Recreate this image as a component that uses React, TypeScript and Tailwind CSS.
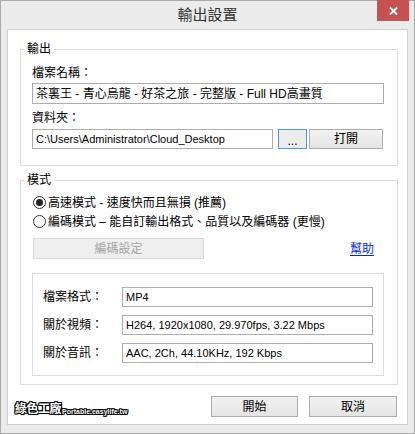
const fieldBox = "h-[20px] border border-[#acacac] bg-white px-[3px] flex items-center text-black whitespace-nowrap overflow-hidden";
const btn = "border border-[#acacac] bg-linear-to-b from-[#f2f2f2] to-[#e4e4e4] flex items-center justify-center text-black";

const Radio = ({ checked, children }: { checked?: boolean; children: React.ReactNode }) => (
  <div className="h-[19px] ml-[1px] flex items-center gap-[2px]">
    <span className="w-[13px] h-[13px] rounded-full border border-[#333] bg-white flex items-center justify-center">
      {checked && <span className="w-[7px] h-[7px] rounded-full bg-[#222]"></span>}
    </span>
    <span>{children}</span>
  </div>
);

const InfoRow = ({ label, value }: { label: string; value: string }) => (
  <>
    <div className="h-[20px] flex items-center">{label}</div>
    <div className={`${fieldBox} text-[11px]`}>{value}</div>
  </>
);

const App = () => {
  return (
    <div className="w-[415px] h-[434px] bg-[#ebebeb] border border-[#a9a9a9] flex flex-col text-[12px] leading-[16px] text-black font-['Liberation_Sans','Noto_Sans_CJK_TC',sans-serif]">
      {/* title bar */}
      <div className="relative h-[28px] shrink-0 flex items-center justify-center">
        <span className="text-[15px] text-[#333]">輸出設置</span>
        <div className="absolute top-[-1px] right-[5px] w-[32px] h-[21px] bg-[#c75050] flex items-center justify-center">
          <svg width="9" height="8" viewBox="0 0 9 8">
            <path d="M1 0.5 L8 7.5 M8 0.5 L1 7.5" stroke="#fff" strokeWidth="1.9" />
          </svg>
        </div>
      </div>

      {/* client */}
      <div className="mx-[6px] mb-[8px] flex-1 border border-[#cfcfcf] bg-white flex flex-col pl-[12px] pr-[9px] pt-[11px]">
        <fieldset className="border border-[#dcdcdc]">
          <legend className="ml-[3px] px-[3px] leading-[16px]">輸出</legend>
          <div className="pl-[11px] pr-[13px] pt-[8px] pb-[16px] flex flex-col">
            <div className="leading-[16px]">檔案名稱：</div>
            <div className={`${fieldBox} mt-[2px] h-[21px]`}>茶裏王 - 青心烏龍 - 好茶之旅 - 完整版 - Full HD高畫質</div>
            <div className="mt-[6px] leading-[16px]">資料夾：</div>
            <div className="mt-[3px] flex h-[20px]">
              <div className={`${fieldBox} w-[241px] text-[11px]`}>C:\Users\Administrator\Cloud_Desktop</div>
              <div className="ml-[5px] w-[29px] border border-[#4a9ae8] bg-[#ececec] flex items-end justify-center pb-[2px] leading-[10px]">...</div>
              <div className={`${btn} ml-[2px] w-[74px]`}>打開</div>
            </div>
          </div>
        </fieldset>

        <fieldset className="mt-[6px] border border-[#dcdcdc]">
          <legend className="ml-[3px] px-[3px] leading-[16px]">模式</legend>
          <div className="pl-[11px] pr-[13px] pt-[5px] pb-[8px] flex flex-col">
            <Radio checked>高速模式 - 速度快而且無損 (推薦)</Radio>
            <Radio>編碼模式 – 能自訂輸出格式、品質以及編碼器 (更慢)</Radio>
            <div className="mt-[7px] h-[21px] flex items-center justify-between">
              <div className="ml-[1px] w-[171px] h-[21px] border border-[#d9d9d9] bg-[#efefef] text-[#a3a3a3] flex items-center justify-center">編碼設定</div>
              <a className="mr-[10px] text-[#0026e0] underline underline-offset-2 cursor-pointer">幫助</a>
            </div>
            <div className="mt-[14px] border border-[#dcdcdc] pl-[10px] pr-[10px] pt-[13px] pb-[12px] grid grid-cols-[79px_1fr] gap-y-[8px]">
              <InfoRow label="檔案格式：" value="MP4" />
              <InfoRow label="關於視頻：" value="H264, 1920x1080, 29.970fps, 3.22 Mbps" />
              <InfoRow label="關於音訊：" value="AAC, 2Ch, 44.10KHz, 192 Kbps" />
            </div>
          </div>
        </fieldset>

        <div className="mt-[11px] flex items-start">
          <div className="ml-[-5px] mt-[6px] flex items-end font-bold text-white [text-shadow:1px_0_0_#000,-1px_0_0_#000,0_1px_0_#000,0_-1px_0_#000,1px_1px_0_#000,-1px_-1px_0_#000,1px_-1px_0_#000,-1px_1px_0_#000]">
            <span className="text-[12px] leading-[14px] tracking-[-0.5px]">綠色工廠</span>
            <span className="text-[7px] leading-[9px] ml-[1px]">Portable.easylife.tw</span>
          </div>
          <div className="ml-auto mr-[1px] flex gap-[11px]">
            <div className={`${btn} w-[87px] h-[21px]`}>開始</div>
            <div className={`${btn} w-[88px] h-[21px]`}>取消</div>
          </div>
        </div>
      </div>
    </div>
  );
};

export default App;
